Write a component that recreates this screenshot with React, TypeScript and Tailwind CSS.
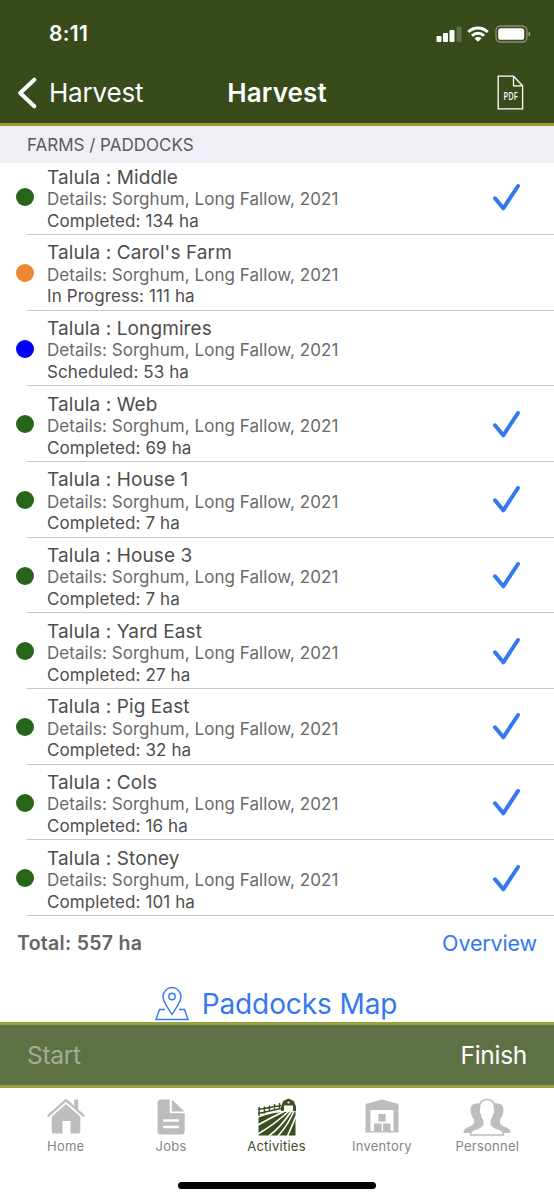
import React from "react";

const paddocks = [
  { name: "Middle", status: "Completed", area: 134 },
  { name: "Carol's Farm", status: "In Progress", area: 111 },
  { name: "Longmires", status: "Scheduled", area: 53 },
  { name: "Web", status: "Completed", area: 69 },
  { name: "House 1", status: "Completed", area: 7 },
  { name: "House 3", status: "Completed", area: 7 },
  { name: "Yard East", status: "Completed", area: 27 },
  { name: "Pig East", status: "Completed", area: 32 },
  { name: "Cols", status: "Completed", area: 16 },
  { name: "Stoney", status: "Completed", area: 101 },
];

const dotColors: Record<string, string> = {
  Completed: "bg-[#27651a]",
  "In Progress": "bg-[#ee8733]",
  Scheduled: "bg-[#0000f5]",
};

function StatusBar() {
  return (
    <div className="flex h-[62px] items-end justify-between pr-[23px] pb-[15px] pl-[49px] text-white">
      <span className="text-[21px] leading-[26px] font-semibold tracking-[0.3px]">
        8:11
      </span>
      <div className="flex items-center pb-[4px]">
        <svg width="26" height="18" viewBox="0 0 26 18" fill="#fff">
          <rect x="0.5" y="11" width="5" height="6" rx="1" />
          <rect x="7" y="8" width="5" height="9" rx="1" />
          <rect x="13.5" y="5" width="5" height="12" rx="1" />
          <rect x="20.5" y="1.5" width="5" height="15.5" rx="1" opacity=".2" />
        </svg>
        <svg className="ml-[5px]" width="22" height="18" viewBox="0 0 22 18">
          <g fill="none" stroke="#fff" strokeWidth="3">
            <path d="M1.3 7A13.8 13.8 0 0 1 20.7 7" />
            <path d="M5 10.8a8.5 8.5 0 0 1 12 0" />
          </g>
          <path d="M7.4 13.2a5 5 0 0 1 7.2 0L11 16.8z" fill="#fff" />
        </svg>
        <svg className="ml-[6px]" width="36" height="18" viewBox="0 0 36 18">
          <rect x="1" y="1" width="31" height="16" rx="4.5" fill="none" stroke="#fff" strokeOpacity=".4" strokeWidth="1.3" />
          <rect x="3.2" y="3.2" width="26" height="11.6" rx="2.6" fill="#fff" />
          <path d="M33.5 6.5q2 .8 2 2.5t-2 2.5z" fill="#fff" opacity=".45" />
        </svg>
      </div>
    </div>
  );
}

function Header() {
  return (
    <header className="h-[126px] border-b-[3px] border-[#98992f] bg-[#374b1b]">
      <StatusBar />
      <div className="grid h-[61px] grid-cols-[1fr_auto_1fr] items-center px-[17px] text-white">
        <div className="flex items-center gap-[12px]">
          <svg width="20" height="32" viewBox="0 0 20 32" fill="none" stroke="#fff" strokeWidth="4" strokeLinecap="round" strokeLinejoin="round">
            <path d="M17.3 2.7L3.2 16l14.1 13.3" />
          </svg>
          <span className="text-[26px] leading-8 tracking-[-0.2px]">Harvest</span>
        </div>
        <h1 className="text-[26px] leading-8 font-semibold tracking-[0.1px]">
          Harvest
        </h1>
        <svg className="mr-[13px] justify-self-end" width="27" height="35" viewBox="0 0 27 35">
          <path d="M1.2 1.2h15.3l9.1 9.6v23H1.2zM16.5 1.2v9.6h9.1" fill="none" stroke="#fff" strokeWidth="1.3" />
          <text x="13.6" y="25" fill="#fff" fontSize="11" fontWeight="600" textAnchor="middle" textLength="14" lengthAdjust="spacingAndGlyphs" fontFamily="Open Sans, sans-serif">
            PDF
          </text>
        </svg>
      </div>
    </header>
  );
}

function PaddockRow({ name, status, area }: { name: string; status: string; area: number }) {
  return (
    <li className="flex h-[75.67px] items-center pl-4">
      <span className={`size-[18px] shrink-0 rounded-full ${dotColors[status]}`} />
      <div className="-ml-[7px] flex h-full grow items-center justify-between border-b border-[#c9c9cb] pr-[33px] pl-5">
        <div className="self-end pb-[2px] text-[#4e4e4e]">
          <h2 className="text-[19px] leading-[23.5px] tracking-[0.1px]">
            Talula : {name}
          </h2>
          <p className="text-[17px] leading-[21.5px] tracking-[0.05px] text-[#6a6a6a]">
            Details: Sorghum, Long Fallow, 2021
          </p>
          <p className="text-[17px] leading-[21.5px] tracking-[0.1px]">
            {status}: {area} ha
          </p>
        </div>
        {status === "Completed" && (
          <svg width="29" height="30" viewBox="0 0 29 30" fill="none" stroke="#3478f0" strokeWidth="4" strokeLinecap="round" strokeLinejoin="round">
            <path d="M3 16.3l8.3 10L26 4" />
          </svg>
        )}
      </div>
    </li>
  );
}

function HomeIcon() {
  return (
    <svg width="38" height="38" viewBox="0 0 38 38" fill="#bdbdbd">
      <path d="M1.5 17.6L19 2.2l17.5 15.4" fill="none" stroke="#bdbdbd" strokeWidth="2.4" strokeLinecap="round" strokeLinejoin="round" />
      <path d="M27.8 2h3v10l-3-2.7z" stroke="#bdbdbd" strokeLinejoin="round" />
      <path d="M19 6L33.3 18.7v14.8q0 2-2 2h-7.8V23h-8v12.5H6.7q-2 0-2-2V18.7z" />
    </svg>
  );
}

function JobsIcon() {
  return (
    <svg width="30" height="38" viewBox="0 0 30 38" fill="#bdbdbd">
      <path d="M5 1.5h8.7v13.8h15V33q0 3.5-3.5 3.5H5q-3.5 0-3.5-3.5V5q0-3.5 3.5-3.5z" />
      <path d="M15.8 1.5l12.7 12H15.8z" />
      <path d="M8 22.5h14M8 29h14" stroke="#fff" strokeWidth="2.3" strokeLinecap="round" />
    </svg>
  );
}

function ActivitiesIcon() {
  return (
    <svg width="38" height="38" viewBox="0 0 38 38">
      <path d="M1.2 9v9M6.5 8.5v7M11.500 7.500v6M16.500 6v6M21.500 5v6M0 11.500L23 7.500M0 15.500l23-5" stroke="#3b4f1f" strokeWidth="1.4" fill="none" />
      <path d="M23 8.500L25.300 3l5.200-2.500L35.700 3 38 8.500V13H23z" fill="#3b4f1f" />
      <path d="M26 7.500h9v5.500h-9z" fill="#fff" />
      <circle cx="30.5" cy="4.5" r="1.1" fill="#fff" />
      <path d="M.5 19.500Q14 13.500 37.500 13.500v24H.5z" fill="#3b4f1f" />
      <path d="M0 27Q14 19 27 13M0 36Q17 26 31 13M11 38Q23 29 33.500 13M20 38Q30 27 36 13M29.500 38Q34 28 38 18" stroke="#fff" strokeWidth="1.6" fill="none" />
    </svg>
  );
}

function InventoryIcon() {
  return (
    <svg width="36" height="36" viewBox="0 0 36 36" fill="#bdbdbd">
      <path d="M1.5 5L18 .5 34.500 5v28.500h-33zM6.500 11v21h23V11z" fillRule="evenodd" />
      <path d="M14.300 15h7.400v7.500h-7.400zM10 24.500h7.500v8H10zM19 24.500h7.500v8H19z" />
    </svg>
  );
}

function PersonnelIcon() {
  return (
    <svg width="50" height="38" viewBox="0 0 50 38" fill="#bdbdbd">
      <path d="M19 5.500q-10.500-1.500-10.500 6 0 6 3.500 10v3.500q-1 2.500-6.500 4.500-4 1.500-4 5.500h21zM31 5.500q10.500-1.500 10.500 6 0 6-3.500 10v3.500q1 2.500 6.500 4.500 4 1.500 4 5.500H28z" />
      <path d="M25 1.500q8 0 7.700 9.500 1 3-.7 5.500-1 4-2.700 6v4q2 3 7.200 4.500 5 1 5 6h-33q0-5 5-6 5.200-1.500 7.200-4.500v-4q-1.700-2-2.700-6-1.700-2.500-.7-5.500-.3-9.500 7.700-9.500z" fill="#fff" stroke="#bdbdbd" strokeWidth="1.6" />
    </svg>
  );
}

function Tab({ label, active, children }: { label: string; active?: boolean; children: React.ReactNode }) {
  return (
    <a className={`flex flex-1 flex-col items-center ${active ? "text-[#3b4f1f]" : "text-[#858585]"}`}>
      <span className="flex h-[39px] items-center">{children}</span>
      <span className="text-[13px] leading-5 tracking-[0.25px]">{label}</span>
    </a>
  );
}

export default function App() {
  return (
    <div className="flex h-[1200px] w-[554px] flex-col overflow-hidden bg-white font-[Inter,sans-serif]">
      <Header />
      <div className="h-[37px] bg-[#f0eff5] pl-[27px] text-[17px] leading-[38px] text-[#5b5b5f]">
        FARMS / PADDOCKS
      </div>
      <ul className="-mt-[3.5px]">
        {paddocks.map((paddock) => (
          <PaddockRow key={paddock.name} {...paddock} />
        ))}
      </ul>
      <div className="flex h-[55px] items-center justify-between px-[17px]">
        <span className="text-[19.5px] font-semibold tracking-[0.3px] text-[#656565]">
          Total: 557 ha
        </span>
        <a className="text-[21.5px] tracking-[-0.15px] text-[#3478f0]">Overview</a>
      </div>
      <div className="flex grow items-end justify-center gap-[13px] pr-[2px] text-[#3478f0]">
        <svg className="mb-[1px]" width="34" height="35" viewBox="0 0 34 35" fill="none" stroke="#3478f0" strokeWidth="1.4">
          <path d="M17 28.500C12 20 8 16 8 10.500a9 9 0 0 1 18 0C26 16 22 20 17 28.500z" />
          <circle cx="17" cy="10.500" r="3.200" />
          <path d="M10 23.500H4.500L1 33.500h32l-3.500-10H24" />
        </svg>
        <span className="text-[28px] leading-9 tracking-[-0.1px]">Paddocks Map</span>
      </div>
      <div className="flex h-[66px] shrink-0 items-center justify-between border-y-[3px] border-[#98a440] bg-[#5d7145] px-[27px] text-[24.5px] tracking-[-0.3px]">
        <span className="text-[#a2ad96]">Start</span>
        <span className="text-white">Finish</span>
      </div>
      <nav className="flex h-[94px] shrink-0 pt-[9px] pr-[14px] pl-[13px]">
        <Tab label="Home"><HomeIcon /></Tab>
        <Tab label="Jobs"><JobsIcon /></Tab>
        <Tab label="Activities" active><ActivitiesIcon /></Tab>
        <Tab label="Inventory"><InventoryIcon /></Tab>
        <Tab label="Personnel"><PersonnelIcon /></Tab>
      </nav>
      <div className="mx-auto h-[18px] w-[198px] shrink-0">
        <div className="h-[7px] rounded-full bg-black" />
      </div>
    </div>
  );
}
